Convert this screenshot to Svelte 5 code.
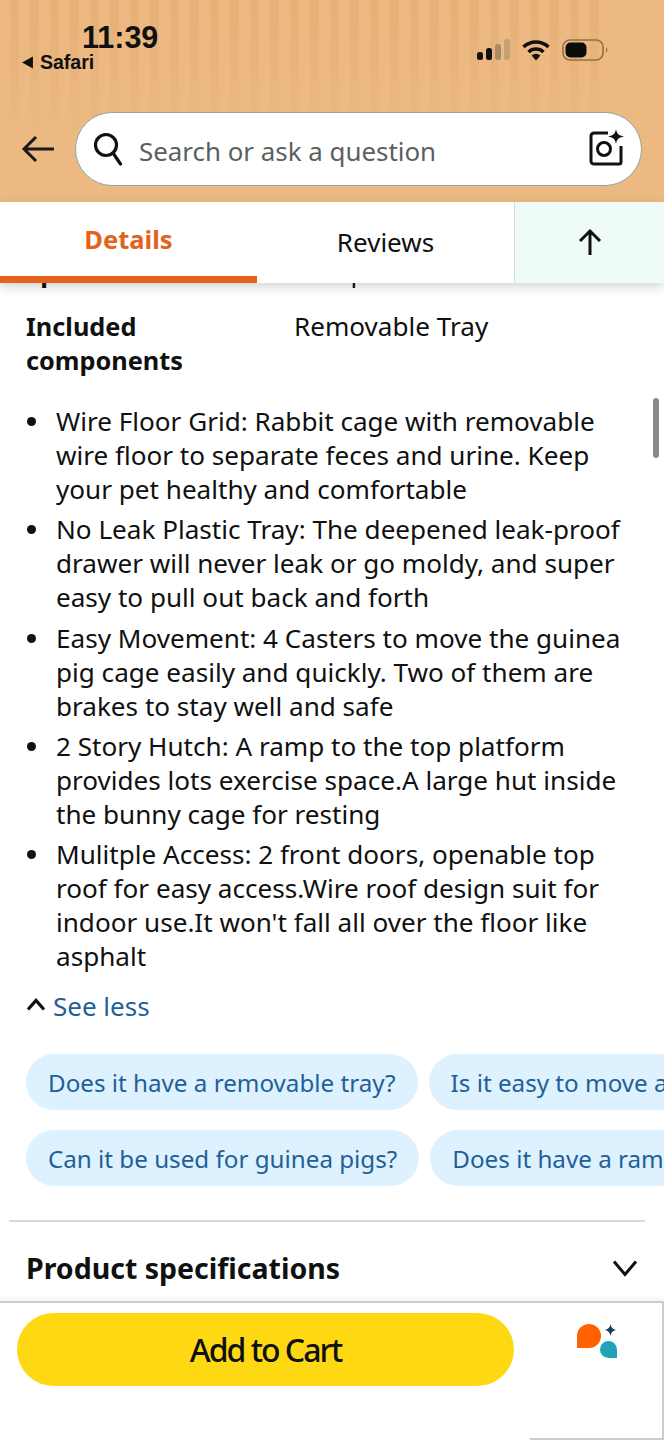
<script lang="ts">
  const bullets = [
    ['Wire Floor Grid: Rabbit cage with removable', 'wire floor to separate feces and urine. Keep', 'your pet healthy and comfortable'],
    ['No Leak Plastic Tray: The deepened leak-proof', 'drawer will never leak or go moldy, and super', 'easy to pull out back and forth'],
    ['Easy Movement: 4 Casters to move the guinea', 'pig cage easily and quickly. Two of them are', 'brakes to stay well and safe'],
    ['2 Story Hutch: A ramp to the top platform', 'provides lots exercise space.A large hut inside', 'the bunny cage for resting'],
    ['Mulitple Access: 2 front doors, openable top', 'roof for easy access.Wire roof design suit for', "indoor use.It won't fall all over the floor like", 'asphalt'],
  ];
  const chipRows = [
    ['Does it have a removable tray?', 'Is it easy to move around?'],
    ['Can it be used for guinea pigs?', 'Does it have a ramp inside?'],
  ];
  const stripes = Array.from({ length: 30 }, (_, i) => i);
</script>

<div class="screen">
  <header class="top">
    <div class="stripes">
      {#each stripes as s}
        <span class="stripe"></span>
      {/each}
    </div>
    <div class="status">
      <div class="status__left">
        <div class="status__time">11:39</div>
        <div class="status__back">
          <svg width="13" height="13" viewBox="0 0 12 12"><path d="M11 0.5V11.5L1 6z" fill="#111" /></svg>
          Safari
        </div>
      </div>
      <div class="status__right">
        <svg width="33" height="22" viewBox="0 0 33 22">
          <rect x="0" y="13" width="6" height="8" rx="2.5" fill="#111" />
          <rect x="9" y="9" width="6" height="12" rx="2.5" fill="#111" />
          <rect x="18" y="5" width="6" height="16" rx="2.5" fill="#a98c62" />
          <rect x="27" y="0" width="6" height="21" rx="2.5" fill="#c4a272" />
        </svg>
        <svg width="28" height="22" viewBox="0 0 28 22" fill="none" stroke="#111" stroke-width="3.6">
          <path d="M1.5 8 A18 18 0 0 1 26.5 8" />
          <path d="M6.5 13 A11 11 0 0 1 21.5 13" />
          <path d="M14 21.5 L9.5 16.5 A6.5 6.5 0 0 1 18.5 16.5z" fill="#111" stroke="none" />
        </svg>
        <svg width="46" height="22" viewBox="0 0 46 22" fill="none">
          <rect x="1" y="1" width="40" height="20" rx="7" stroke="#8f7146" stroke-width="1.6" />
          <rect x="3.5" y="3.5" width="21" height="15" rx="5" fill="#0c0c0c" />
          <path d="M44 8.5 A3 3 0 0 1 44 13.5z" fill="#8f7146" />
        </svg>
      </div>
    </div>
    <div class="searchrow">
      <svg class="back" width="34" height="28" viewBox="0 0 34 28" fill="none" stroke="#1a1a1a" stroke-width="3">
        <path d="M33 14H3M15 2 3 14l12 12" />
      </svg>
      <div class="search">
        <svg width="30" height="34" viewBox="0 0 30 34" fill="none" stroke="#111" stroke-width="3.2">
          <circle cx="13" cy="13" r="10.5" />
          <path d="M20 21l7.5 11" stroke-linecap="round" />
        </svg>
        <span class="search__text">Search or ask a question</span>
        <svg class="search__cam" width="36" height="38" viewBox="0 0 36 38" fill="none">
          <path d="M19 5H5a3 3 0 0 0-3 3v25a3 3 0 0 0 3 3h25a2 2 0 0 0 2-2V18" stroke="#111" stroke-width="3" />
          <circle cx="15" cy="21" r="6.5" stroke="#111" stroke-width="3" />
          <path d="M27 1c1 5 2.500 6.500 8 7.500-5.500 1-7 2.500-8 7.500-1-5-2.500-6.500-8-7.500 5.500-1 7-2.500 8-7.500z" fill="#111" />
        </svg>
      </div>
    </div>
  </header>

  <nav class="tabs">
    <div class="tab tab--active">Details</div>
    <div class="tab tab--plain">Reviews</div>
    <div class="tab tab--up">
      <svg width="26" height="28" viewBox="0 0 26 28" fill="none" stroke="#111" stroke-width="3">
        <path d="M13 27V3M3 13 13 3l10 10" />
      </svg>
    </div>
  </nav>

  <main class="content">
    <div class="scrollbar"></div>
    <div class="peek"><span>Special Feature</span><span class="peek__val">Compact</span></div>
    <div class="spec">
      <div class="spec__key">Included components</div>
      <div class="spec__val">Removable Tray</div>
    </div>
    <ul class="bullets">
      {#each bullets as lines}
        <li>
          {#each lines as line}
            <span class="line">{line}</span>
          {/each}
        </li>
      {/each}
    </ul>
    <div class="seeless">
      <svg width="20" height="14" viewBox="0 0 20 14" fill="none" stroke="#111" stroke-width="3.2">
        <path d="M2 12.500 10 3.500l8 9" />
      </svg>
      See less
    </div>
    <div class="chips">
      {#each chipRows as row}
        <div class="chips__row">
          {#each row as chip}
            <span class="chip">{chip}</span>
          {/each}
        </div>
      {/each}
    </div>
    <div class="divider"></div>
    <div class="section">
      <span>Product specifications</span>
      <svg width="26" height="18" viewBox="0 0 26 18" fill="none" stroke="#111" stroke-width="3">
        <path d="M2 2.500 13 15.500 24 2.500" />
      </svg>
    </div>
  </main>

  <footer class="cartbar">
    <button class="cart">Add to Cart</button>
    <div class="assist">
      <svg width="42" height="36" viewBox="0 0 42 36">
        <path d="M0 24V12A12 12 0 1 1 12 24z" fill="#ff6200" />
        <path d="M40 34H31.500A8.500 8.500 0 1 1 40 25.500z" fill="#20a3b8" />
        <path d="M33.500 0c.7 3.700 2.100 5.200 6 6-3.900.8-5.300 2.300-6 6-.7-3.700-2.100-5.200-6-6 3.900-.8 5.300-2.300 6-6z" fill="#0e4455" />
      </svg>
    </div>
    <div class="cartbar__edge"></div>
  </footer>
</div>

<style>
  :global(body) {
    margin: 0;
    background: #fff;
  }

  .screen {
    color: #0f1111;
    display: flex;
    flex-direction: column;
    font-family: 'Noto Sans', sans-serif;
    height: 1440px;
    overflow: hidden;
    position: relative;
    width: 664px;
  }

  .top {
    background: #ebb981;
    box-sizing: border-box;
    height: 202px;
    padding: 20px 22px 0 21px;
    position: relative;
  }

  .stripes {
    display: flex;
    gap: 11px;
    inset: 0 0 60px 10px;
    position: absolute;
  }

  .stripe {
    background: linear-gradient(#e3aa6f, #ebb981);
    opacity: 0.6;
    width: 9px;
  }

  .status {
    align-items: flex-start;
    display: flex;
    justify-content: space-between;
    position: relative;
  }

  .status__left {
    display: flex;
    flex-direction: column;
  }

  .status__time {
    font-family: 'Liberation Sans', sans-serif;
    font-size: 30.5px;
    font-weight: 700;
    line-height: 34px;
    margin-left: 61px;
  }

  .status__back {
    align-items: center;
    display: flex;
    font-family: 'Liberation Sans', sans-serif;
    font-size: 19.5px;
    font-weight: 700;
    gap: 6px;
    line-height: 20px;
    margin-top: -2px;
  }

  .status__right {
    align-items: center;
    display: flex;
    gap: 12px;
    margin: 19px 34px 0 auto;
  }

  .searchrow {
    align-items: center;
    display: flex;
    gap: 20px;
    margin-top: 40px;
    position: relative;
  }

  .back {
    flex: none;
  }

  .search {
    align-items: center;
    background: #fff;
    border: 1.5px solid #8fa7a3;
    border-radius: 37px;
    box-sizing: border-box;
    display: flex;
    flex: 1;
    height: 74px;
    padding: 0 16px 0 17px;
  }

  .search__text {
    color: #5a5f5f;
    font-size: 25.900px;
    margin-left: 16px;
    padding-top: 4px;
  }

  .search__cam {
    margin-left: auto;
    margin-top: -4px;
  }

  .tabs {
    background: #fff;
    box-shadow: 0 4px 10px rgba(0, 0, 0, 0.16);
    display: flex;
    height: 81px;
    position: relative;
    z-index: 2;
  }

  .tab {
    align-items: center;
    box-sizing: border-box;
    display: flex;
    font-size: 26px;
    justify-content: center;
  }

  .tab--active {
    border-bottom: 7px solid #e8621c;
    color: #e2631c;
    font-size: 25.500px;
    font-weight: 700;
    width: 257px;
  }

  .tab--plain {
    padding-bottom: 2px;
    width: 257px;
  }

  .tab--up {
    background: #effbf8;
    border-left: 1px solid #d5dbdb;
    flex: 1;
    padding-bottom: 2px;
  }

  .content {
    flex: 1;
    min-height: 0;
    overflow: hidden;
    padding: 0 9px;
    position: relative;
  }

  .scrollbar {
    background: #8a8a8a;
    border-radius: 3px;
    height: 60px;
    position: absolute;
    right: 5px;
    top: 115px;
    width: 6px;
  }

  .peek {
    display: grid;
    font-size: 26px;
    font-weight: 700;
    grid-template-columns: 268px 1fr;
    height: 8px;
    line-height: 8px;
    margin-top: -15px;
    padding-left: 17px;
  }

  .peek__val {
    font-weight: 400;
  }

  .spec {
    display: grid;
    font-size: 26.100px;
    grid-template-columns: 268px 1fr;
    line-height: 34px;
    margin-top: 33px;
    padding-left: 17px;
  }

  .spec__key {
    font-size: 25.300px;
    font-weight: 700;
    width: 200px;
  }

  .bullets {
    font-size: 26.100px;
    line-height: 34px;
    list-style: none;
    margin: 27px 0 0;
    padding: 0 0 0 47px;
  }

  .bullets li {
    margin-bottom: 6.250px;
    position: relative;
  }

  .bullets li::before {
    background: #0f1111;
    border-radius: 50%;
    content: '';
    height: 9px;
    left: -29px;
    position: absolute;
    top: 13px;
    width: 9px;
  }

  .line {
    display: block;
    white-space: nowrap;
  }

  .seeless {
    align-items: center;
    color: #1f6098;
    display: flex;
    font-size: 26px;
    gap: 7px;
    line-height: 34px;
    margin-top: 16px;
    padding-left: 17px;
  }

  .seeless svg {
    margin-bottom: 4px;
  }

  .chips {
    display: flex;
    flex-direction: column;
    gap: 20px;
    margin-top: 31px;
    padding-left: 17px;
  }

  .chips__row {
    display: flex;
    gap: 11px;
    white-space: nowrap;
  }

  .chip {
    align-items: center;
    background: #def1fe;
    border-radius: 28px;
    box-sizing: border-box;
    color: #1f6098;
    display: flex;
    flex: none;
    font-size: 24.200px;
    height: 56px;
    padding: 0 22px;
  }

  .divider {
    background: #d5dbdb;
    height: 2px;
    margin-top: 34px;
    width: 636px;
  }

  .section {
    align-items: center;
    display: flex;
    font-size: 28.500px;
    font-weight: 700;
    justify-content: space-between;
    margin-top: 27px;
    padding: 0 17px;
  }

  .cartbar {
    background: #fff;
    border-right: 2px solid #c8cdcd;
    border-top: 2px solid #c8cdcd;
    box-shadow: 0 -3px 6px rgba(0, 0, 0, 0.05);
    box-sizing: border-box;
    display: flex;
    height: 139px;
    padding: 10px 0 0 17px;
    position: relative;
  }

  .cartbar__edge {
    background: #c8cdcd;
    bottom: 0;
    height: 2px;
    position: absolute;
    right: 0;
    width: 132px;
  }

  .cart {
    background: #ffd814;
    border: 0;
    border-radius: 37px;
    color: #0f1111;
    font-family: 'Noto Sans', sans-serif;
    font-size: 32px;
    font-weight: 500;
    height: 73px;
    letter-spacing: -2px;
    padding: 0;
    width: 497px;
  }

  .assist {
    margin: 11px 0 0 63px;
  }
</style>
